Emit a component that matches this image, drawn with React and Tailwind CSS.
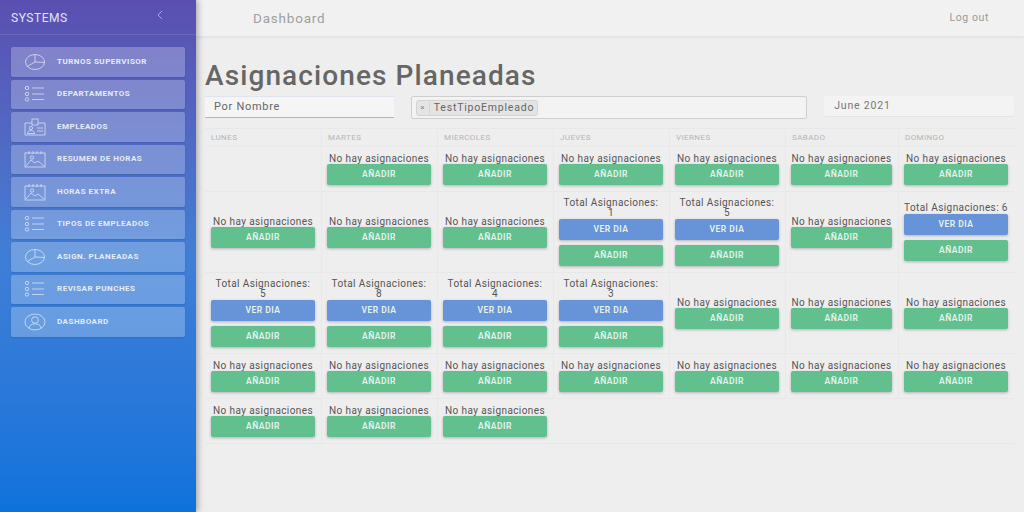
import React from "react";

const font = { fontFamily: "Roboto, sans-serif" };

const PieIcon = () => (
  <svg width="22" height="18" viewBox="0 0 22 18" fill="none" stroke="currentColor" strokeWidth="0.7">
    <ellipse cx="11" cy="9" rx="9.5" ry="7.5" />
    <path d="M11 1.5V9L3 13.5M11 9l9.500 .5" />
  </svg>
);

const ListIcon = () => (
  <svg width="22" height="18" viewBox="0 0 22 18" fill="none" stroke="currentColor" strokeWidth="0.7">
    <circle cx="3" cy="3" r="1.7" />
    <circle cx="3" cy="9" r="1.7" />
    <circle cx="3" cy="14.5" r="1.7" />
    <path d="M8 3h12M8 9h12M8 14.5h12" />
  </svg>
);

const CardIcon = () => (
  <svg width="22" height="18" viewBox="0 0 22 18" fill="none" stroke="currentColor" strokeWidth="0.7">
    <path d="M8 5H1v12h20V5h-7" />
    <rect x="8" y="1" width="6" height="6" />
    <circle cx="7" cy="10" r="1.6" />
    <path d="M3.5 15.5c0-2 1.500-3 3.500-3s3.500 1 3.500 3zM13 10h6M13 13h6" />
  </svg>
);

const PhotoIcon = () => (
  <svg width="22" height="18" viewBox="0 0 22 18" fill="none" stroke="currentColor" strokeWidth="0.7">
    <rect x="1" y="3" width="20" height="14" />
    <path d="M5 1v3M9 1v3M13 1v3M17 1v3M2 16l5-6 4 3 3-2 6 5" />
    <circle cx="8" cy="7.5" r="1.7" />
  </svg>
);

const UserIcon = () => (
  <svg width="22" height="18" viewBox="0 0 22 18" fill="none" stroke="currentColor" strokeWidth="0.7">
    <ellipse cx="11" cy="9" rx="10" ry="8" />
    <ellipse cx="11" cy="7" rx="3.4" ry="3.2" />
    <path d="M5 15c.5-3 3-4.200 6-4.200s5.500 1.200 6 4.200" />
  </svg>
);

const menu = [
  { label: "TURNOS SUPERVISOR", icon: PieIcon },
  { label: "DEPARTAMENTOS", icon: ListIcon },
  { label: "EMPLEADOS", icon: CardIcon },
  { label: "RESUMEN DE HORAS", icon: PhotoIcon },
  { label: "HORAS EXTRA", icon: PhotoIcon },
  { label: "TIPOS DE EMPLEADOS", icon: ListIcon },
  { label: "ASIGN. PLANEADAS", icon: PieIcon },
  { label: "REVISAR PUNCHES", icon: ListIcon },
  { label: "DASHBOARD", icon: UserIcon },
];

const days = ["LUNES", "MARTES", "MIERCOLES", "JUEVES", "VIERNES", "SABADO", "DOMINGO"];

// null = empty cell, 0 = no assignments, n = total
const weeks = [
  [null, 0, 0, 0, 0, 0, 0],
  [0, 0, 0, 1, 5, 0, 6],
  [5, 8, 4, 3, 0, 0, 0],
  [0, 0, 0, 0, 0, 0, 0],
  [0, 0, 0],
];

const Btn = ({ blue, children }) => (
  <button
    className={`w-full h-[21px] shrink-0 rounded-[2px] text-[8.5px] font-semibold tracking-[0.5px] text-[#e6f3ec] shadow-[0_1px_3px_rgba(0,0,0,0.25)] ${
      blue ? "bg-[#6794d8]" : "bg-[#62c08f]"
    }`}
  >
    {children}
  </button>
);

const Cell = ({ value, index }) => {
  const border = index === 0 ? "pl-[6px]" : "border-l border-[#e8e8e8] pl-[5px]";
  if (value === null || value === undefined) {
    return <div className={border} />;
  }
  return (
    <div className={`flex flex-col justify-center pr-[6px] pt-[6px] pb-[6px] ${border}`}>
      {value === 0 ? (
        <>
          <p className="text-center text-[10px] leading-[11px] tracking-[0.4px] text-[#555] whitespace-nowrap">
            No hay asignaciones
          </p>
          <Btn>AÑADIR</Btn>
        </>
      ) : (
        <>
          <p
            className={`text-center text-[10px] leading-[10px] tracking-[0.4px] text-[#555] mb-[1px] ${
              index === 6 ? "whitespace-nowrap" : "mx-[3px]"
            }`}
          >
            Total Asignaciones: {value}
          </p>
          <Btn blue>VER DIA</Btn>
          <div className="h-[5px] shrink-0" />
          <Btn>AÑADIR</Btn>
        </>
      )}
    </div>
  );
};

export default function App() {
  return (
    <div className="flex w-[1024px] h-[512px] overflow-hidden bg-[#eeeeee]" style={font}>
      <aside className="w-[196px] h-full shrink-0 flex flex-col bg-gradient-to-b from-[#5a4fb0] via-[#3f7fd6] to-[#0d72dc] shadow-[2px_0_6px_rgba(0,0,0,0.3)] z-10">
        <div className="h-[35px] flex items-center justify-between pl-[11px] pr-[33px] border-b border-white/10">
          <span className="text-[12px] tracking-[0.55px] text-[#e3e3f3] mt-[1px]">SYSTEMS</span>
          <svg width="6" height="10" viewBox="0 0 6 10" fill="none" stroke="#a9b4e6" strokeWidth="0.9" className="mb-[4px]">
            <path d="M5 1 1 5l4 4" />
          </svg>
        </div>
        <nav className="flex flex-col gap-[3px] pt-[12px] px-[11px]">
          {menu.map(({ label, icon: Icon }) => (
            <div key={label} className="h-[29.5px] flex items-center rounded-[2px] bg-white/25 text-[#e4ecf8] shadow-[0_1px_2px_rgba(0,0,0,0.12)]">
              <span className="w-[46px] flex justify-center pl-[1px]">
                <Icon />
              </span>
              <span className="text-[8px] font-bold tracking-[0.5px]">{label}</span>
            </div>
          ))}
        </nav>
      </aside>

      <div className="flex-1 min-w-0 flex flex-col">
        <header className="h-[36px] shrink-0 flex items-center justify-between pl-[57px] pr-[35px] bg-[#f1f1f1] shadow-[0_1px_3px_rgba(0,0,0,0.08)]">
          <span className="text-[13.5px] tracking-[0.8px] text-[#a0a0a0]">Dashboard</span>
          <span className="text-[10.5px] tracking-[0.6px] text-[#999]">Log out</span>
        </header>

        <main className="pl-[9px] pr-[10px] pt-[25px]">
          <h1 className="text-[28px] leading-[30px] font-medium tracking-[1.1px] text-[#666]">Asignaciones Planeadas</h1>

          <div className="flex mt-[5px] h-[24px] items-start">
            <div className="w-[189px] h-[22px] flex items-center pl-[9px] bg-[#f5f5f6] border-t border-[#dfe3f0] border-b border-b-[#a9b4e0] text-[11px] tracking-[0.7px] text-[#666]">
              Por Nombre
            </div>
            <div className="w-[397px] ml-[17px] h-[23px] flex items-center pl-[4px] bg-[#f3f3f3] border border-[#cfcfcf] rounded-[2px]">
              <span className="h-[16px] flex items-center rounded-[3px] border border-[#d4d4d4] bg-[#e4e4e4] text-[10.5px] tracking-[0.8px] text-[#666]">
                <span className="w-[13px] text-center text-[8px] text-[#888] border-r border-[#d4d4d4]">×</span>
                <span className="pl-[4px] pr-[3px]">TestTipoEmpleado</span>
              </span>
            </div>
            <div className="w-[190px] ml-[17px] h-[20px] flex items-center pl-[10px] bg-[#f3f3f3] rounded-[2px] shadow-[0_1px_1px_rgba(0,0,0,0.05)] text-[10.5px] tracking-[0.8px] text-[#777]">
              June 2021
            </div>
          </div>

          <section className="mt-[8px] border-t border-[#e8e8e8]">
            <div className="grid grid-cols-[116px_116px_116px_116px_116px_113px_116px] h-[18px] border-b border-[#e8e8e8]">
              {days.map((d, i) => (
                <div key={d} className={`flex items-center pl-[6px] pt-[1px] text-[8px] tracking-[0.4px] text-[#b5b5b5] ${i ? "border-l border-[#e8e8e8]" : ""}`}>
                  {d}
                </div>
              ))}
            </div>
            {weeks.map((week, w) => (
              <div key={w} className="grid grid-cols-[116px_116px_116px_116px_116px_113px_116px] border-b border-[#e8e8e8] w-fit">
                {week.map((v, i) => (
                  <Cell key={i} value={v} index={i} />
                ))}
              </div>
            ))}
          </section>
        </main>
      </div>
    </div>
  );
}
